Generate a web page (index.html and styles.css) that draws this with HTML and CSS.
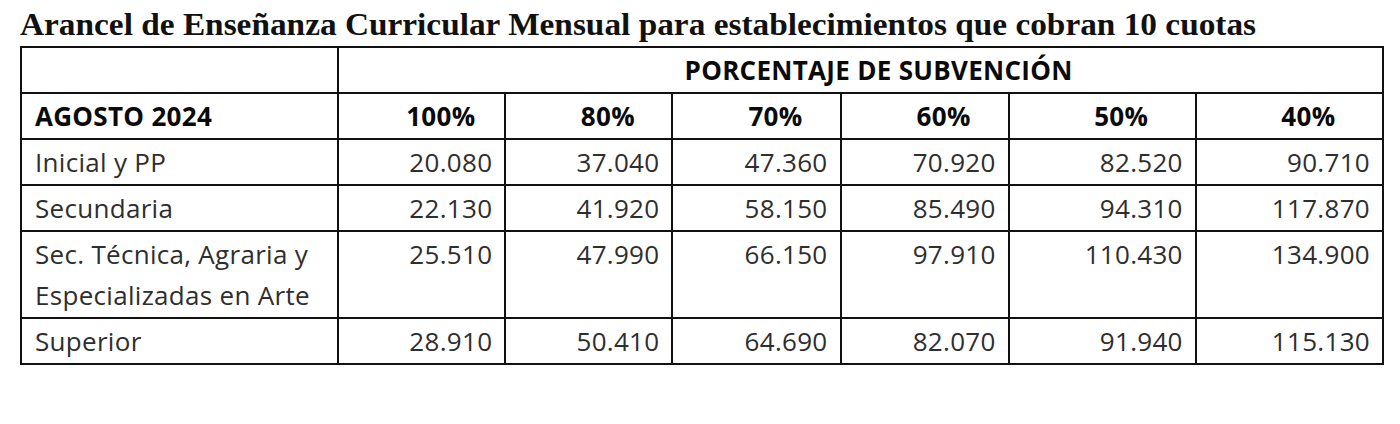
FILE: index.html
```html
<!DOCTYPE html>
<html lang="es">
<head>
<meta charset="utf-8">
<title>Arancel</title>
<link rel="stylesheet" href="styles.css">
</head>
<body>
<h1 class="title">Arancel de Enseñanza Curricular Mensual para establecimientos que cobran 10 cuotas</h1>
<table class="fees">
  <colgroup>
    <col class="c-label"><col class="c-a"><col class="c-a"><col class="c-b"><col class="c-b"><col class="c-c"><col class="c-c">
  </colgroup>
  <tr>
    <td></td>
    <td colspan="6" class="head span">PORCENTAJE DE SUBVENCIÓN</td>
  </tr>
  <tr>
    <td class="head label">AGOSTO 2024</td>
    <td class="head pct">100%</td>
    <td class="head pct">80%</td>
    <td class="head pct">70%</td>
    <td class="head pct">60%</td>
    <td class="head pct">50%</td>
    <td class="head pct">40%</td>
  </tr>
  <tr>
    <td class="label">Inicial y PP</td>
    <td class="num">20.080</td><td class="num">37.040</td><td class="num">47.360</td><td class="num">70.920</td><td class="num">82.520</td><td class="num">90.710</td>
  </tr>
  <tr>
    <td class="label">Secundaria</td>
    <td class="num">22.130</td><td class="num">41.920</td><td class="num">58.150</td><td class="num">85.490</td><td class="num">94.310</td><td class="num">117.870</td>
  </tr>
  <tr>
    <td class="label">Sec. Técnica, Agraria y<br>Especializadas en Arte</td>
    <td class="num">25.510</td><td class="num">47.990</td><td class="num">66.150</td><td class="num">97.910</td><td class="num">110.430</td><td class="num">134.900</td>
  </tr>
  <tr>
    <td class="label">Superior</td>
    <td class="num">28.910</td><td class="num">50.410</td><td class="num">64.690</td><td class="num">82.070</td><td class="num">91.940</td><td class="num">115.130</td>
  </tr>
</table>
</body>
</html>
```

FILE: styles.css
```css
html, body {
  margin: 0;
  padding: 0;
  background: #ffffff;
}

.title {
  width: max-content;
  margin: 0 0 3px 20px;
  padding-top: 7px;
  font-family: "Liberation Serif", "Times New Roman", serif;
  font-weight: bold;
  font-size: 31px;
  line-height: 36px;
  color: #111;
  white-space: nowrap;
  transform: scaleX(1.075);
  transform-origin: left top;
}

.fees {
  margin-left: 20px;
  border-collapse: collapse;
  table-layout: fixed;
  width: 1364px;
  font-family: "Open Sans", "Noto Sans", sans-serif;
  font-size: 26px;
  letter-spacing: 0.3px;
  color: #2e2e2e;
}

.c-label { width: 317px; }
.c-a { width: 167px; }
.c-b { width: 168px; }
.c-c { width: 187px; }

.fees td {
  border: 2px solid #111;
  padding: 2px 12px 1px 13px;
  line-height: 41px;
  vertical-align: top;
  white-space: nowrap;
}

.fees td.head {
  font-weight: bold;
  color: #0a0a0a;
}

.fees td.span {
  text-align: center;
  padding-left: 48px;
}

.fees td.pct {
  text-align: center;
  padding-left: 40px;
  padding-right: 2px;
}

.fees td.label {
  text-align: left;
}

.fees td.num {
  text-align: right;
}
```
